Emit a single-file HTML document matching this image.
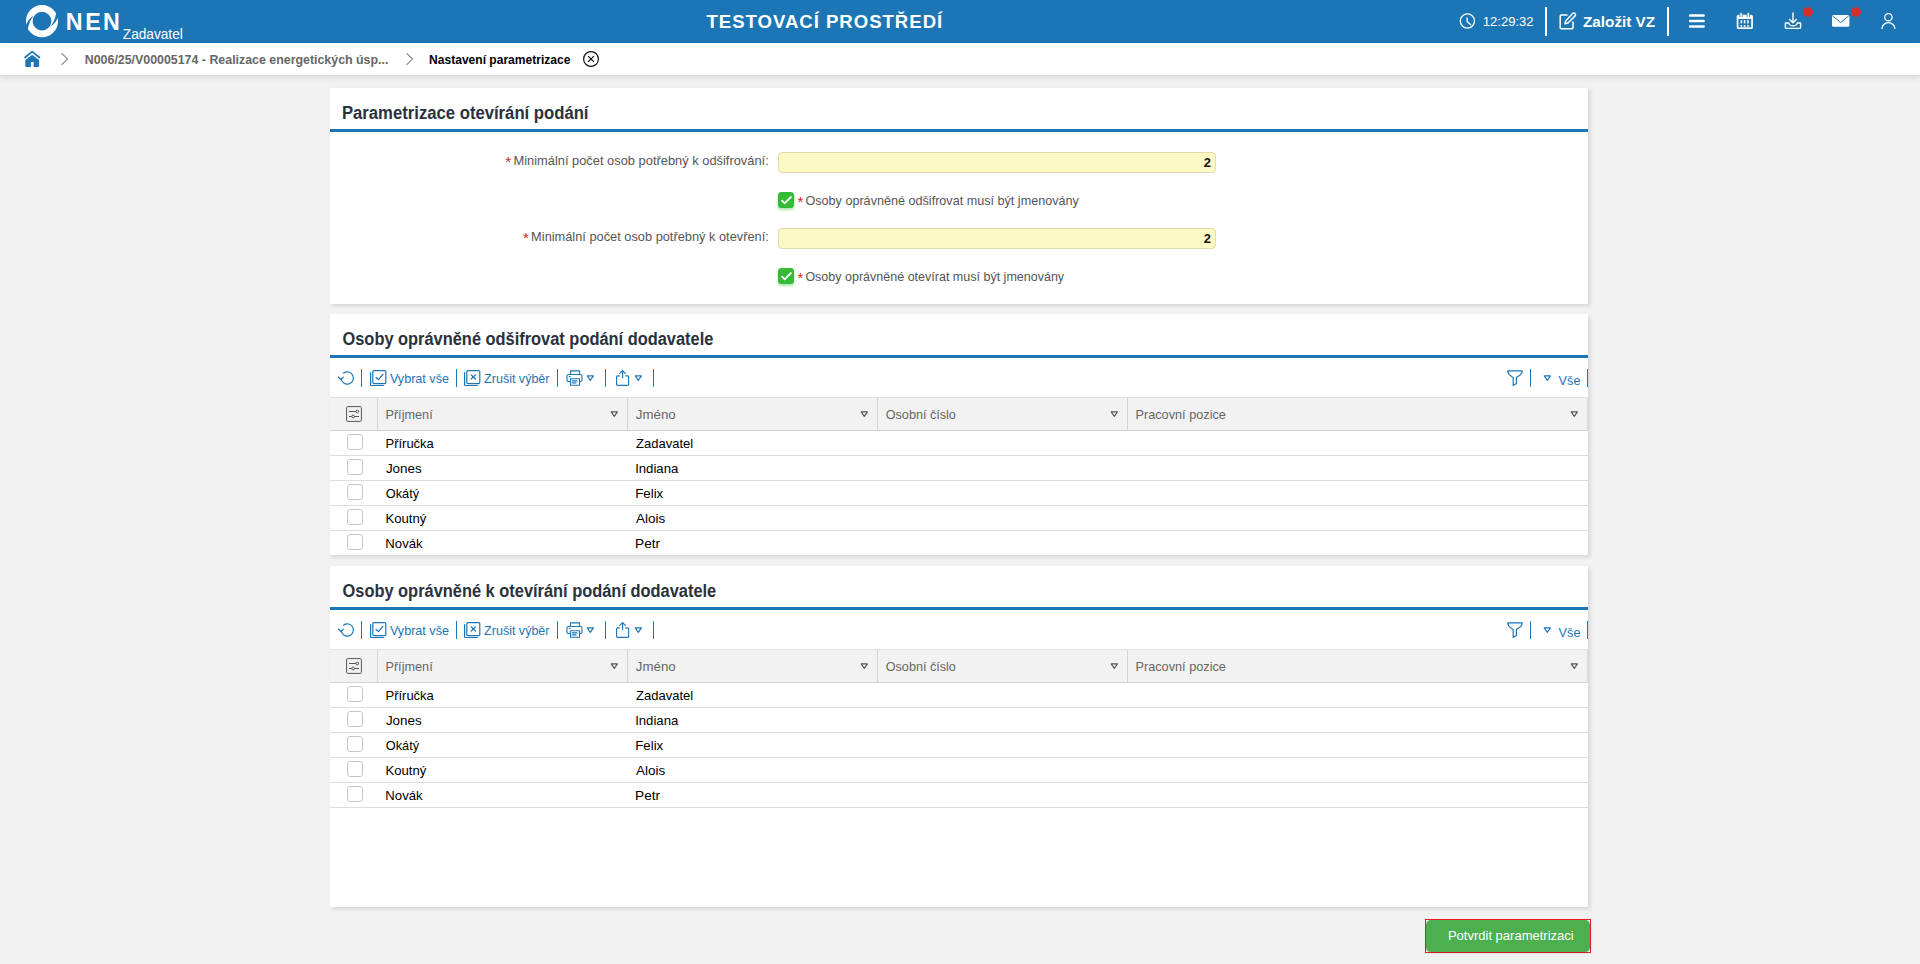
<!DOCTYPE html>
<html lang="cs">
<head>
<meta charset="utf-8">
<title>NEN - Nastavení parametrizace</title>
<style>
*{box-sizing:border-box;margin:0;padding:0}
html,body{width:1920px;height:964px;overflow:hidden;background:#f2f2f2;font-family:"Liberation Sans",sans-serif;font-size:13px;color:#000}
.abs{position:absolute}
.t{position:absolute;white-space:nowrap;line-height:1}
#hdr{position:absolute;left:0;top:0;width:1920px;height:43px;background:#1c75b4;color:#fff}
#bc{position:absolute;left:0;top:43px;width:1920px;height:32px;background:#fff;box-shadow:0 2px 6px rgba(0,0,0,.14)}
.panel{position:absolute;left:330px;width:1258px;background:#fff;box-shadow:2px 2px 4px rgba(0,0,0,.13)}
.ptitle{position:absolute;left:12px;top:15px;font-weight:bold;font-size:18px;color:#29323d;white-space:nowrap;line-height:20px}
.pline{position:absolute;left:0;top:41px;width:1258px;height:3px;background:#1c75b4}
.lbl{position:absolute;white-space:nowrap;color:#555;font-size:13px;line-height:16px}
.req{color:#d8232a;display:inline-block;width:8px;font-size:15.500px;line-height:0;position:relative;top:2px;left:-0.300px}
.inp{position:absolute;left:448px;width:438px;height:21px;background:#fdf9c4;border:1px solid #e1dbad;border-radius:4px;text-align:right;font-weight:bold;font-size:13px;line-height:19px;padding-right:4px;color:#111}
.chk{position:absolute;width:16px;height:16px;border-radius:3.500px;background:#34ba34;box-shadow:0 2px 3px rgba(52,186,52,.4)}
.tb{position:absolute;left:0;top:44px;width:1258px;height:39px;color:#1c75b4;font-size:13px}
.sep{position:absolute;top:11px;width:1px;height:18px;background:#1c75b4}
.th{position:absolute;left:0;top:83px;width:1258px;height:34px;background:#f2f2f2;border-top:1px solid #e2e2e2;border-bottom:1px solid #d4d4d4;border-right:1px solid #dcdcdc;color:#666;font-size:13px}
.th .c{position:absolute;top:0;height:32px;border-left:1px solid #d4d4d4}
.th .c span{position:absolute;left:8px;top:9px;line-height:15px;white-space:nowrap}
.row{position:absolute;left:0;width:1258px;height:25px;border-bottom:1px solid #ddd;font-size:13px;color:#000}
.row span{position:absolute;top:5px;line-height:15px;white-space:nowrap}
.tbt{font-size:13px;color:#1c75b4}
.cb{position:absolute;left:17px;top:3px;width:16px;height:16px;border:1px solid #c6c6c6;border-radius:3px;background:#fff}
/*fit*/
#nen{left:65px!important;top:10px!important;right:auto!important;transform:translateX(0.87px) scaleX(0.9493);transform-origin:0 0}
#zad{left:122px!important;top:27px!important;right:auto!important;transform:translateX(0.85px) scaleX(0.9744);transform-origin:0 0}
#test{left:706px!important;top:12px!important;right:auto!important;transform:translateX(0.46px) scaleX(0.9777);transform-origin:0 0}
#clock{left:1482px!important;top:15px!important;right:auto!important;transform:translateX(0.71px) scaleX(1.0053);transform-origin:0 0}
#zal{left:1583px!important;top:14px!important;right:auto!important;transform:translateX(0.00px) scaleX(1.0180);transform-origin:0 0}
#bc1{left:84px!important;top:10px!important;right:auto!important;transform:translateX(0.77px) scaleX(0.9527);transform-origin:0 0}
#bc2{left:429px!important;top:10px!important;right:auto!important;transform:translateX(0.07px) scaleX(0.9272);transform-origin:0 0}
#pt1{left:11px!important;top:15px!important;right:auto!important;transform:translateX(0.94px) scaleX(0.9266);transform-origin:0 0}
#p2t{left:12px!important;top:15px!important;right:auto!important;transform:translateX(0.50px) scaleX(0.9109);transform-origin:0 0}
#p3t{left:12px!important;top:15px!important;right:auto!important;transform:translateX(0.50px) scaleX(0.9112);transform-origin:0 0}
#l1{left:175px!important;top:65px!important;right:auto!important;transform:translateX(0.52px) scaleX(0.9897);transform-origin:0 0}
#l2{left:467px!important;top:105px!important;right:auto!important;transform:translateX(0.68px) scaleX(0.9701);transform-origin:0 0}
#l3{left:193px!important;top:141px!important;right:auto!important;transform:translateX(0.24px) scaleX(0.9847);transform-origin:0 0}
#l4{left:467px!important;top:181px!important;right:auto!important;transform:translateX(0.68px) scaleX(0.9626);transform-origin:0 0}
#btn{left:21px!important;top:9px!important;right:auto!important;transform:translateX(0.91px) scaleX(1.0005);transform-origin:0 0}
#p2a{left:59px!important;top:14px!important;right:auto!important;transform:translateX(0.91px) scaleX(0.9690);transform-origin:0 0}
#p2b{left:154px!important;top:14px!important;right:auto!important;transform:translateX(0.11px) scaleX(0.9627);transform-origin:0 0}
#p2c{left:1228px!important;top:16px!important;right:auto!important;transform:translateX(0.62px) scaleX(0.9755);transform-origin:0 0}
#p2h0{left:7px!important;top:9px!important;right:auto!important;transform:translateX(0.41px) scaleX(0.9770);transform-origin:0 0}
#p2h1{left:7px!important;top:9px!important;right:auto!important;transform:translateX(0.85px) scaleX(1.0214);transform-origin:0 0}
#p2h2{left:7px!important;top:9px!important;right:auto!important;transform:translateX(0.75px) scaleX(0.9704);transform-origin:0 0}
#p2h3{left:7px!important;top:9px!important;right:auto!important;transform:translateX(0.44px) scaleX(0.9778);transform-origin:0 0}
#p2r0a{left:55px!important;top:5px!important;right:auto!important;transform:translateX(0.47px) scaleX(0.9992);transform-origin:0 0}
#p2r0b{left:306px!important;top:5px!important;right:auto!important;transform:translateX(0.01px) scaleX(1.0009);transform-origin:0 0}
#p2r1a{left:55px!important;top:5px!important;right:auto!important;transform:translateX(0.91px) scaleX(1.0309);transform-origin:0 0}
#p2r1b{left:305px!important;top:5px!important;right:auto!important;transform:translateX(0.13px) scaleX(1.0114);transform-origin:0 0}
#p2r2a{left:55px!important;top:5px!important;right:auto!important;transform:translateX(0.78px) scaleX(0.9837);transform-origin:0 0}
#p2r2b{left:305px!important;top:5px!important;right:auto!important;transform:translateX(0.26px) scaleX(1.0195);transform-origin:0 0}
#p2r3a{left:55px!important;top:5px!important;right:auto!important;transform:translateX(0.41px) scaleX(1.0120);transform-origin:0 0}
#p2r3b{left:306px!important;top:5px!important;right:auto!important;transform:translateX(0.05px) scaleX(1.0394);transform-origin:0 0}
#p2r4a{left:55px!important;top:5px!important;right:auto!important;transform:translateX(0.37px) scaleX(1.0105);transform-origin:0 0}
#p2r4b{left:305px!important;top:5px!important;right:auto!important;transform:translateX(0.12px) scaleX(1.0468);transform-origin:0 0}
#p3a{left:59px!important;top:14px!important;right:auto!important;transform:translateX(0.91px) scaleX(0.9690);transform-origin:0 0}
#p3b{left:154px!important;top:14px!important;right:auto!important;transform:translateX(0.11px) scaleX(0.9627);transform-origin:0 0}
#p3c{left:1228px!important;top:16px!important;right:auto!important;transform:translateX(0.62px) scaleX(0.9755);transform-origin:0 0}
#p3h0{left:7px!important;top:9px!important;right:auto!important;transform:translateX(0.41px) scaleX(0.9770);transform-origin:0 0}
#p3h1{left:7px!important;top:9px!important;right:auto!important;transform:translateX(0.85px) scaleX(1.0214);transform-origin:0 0}
#p3h2{left:7px!important;top:9px!important;right:auto!important;transform:translateX(0.75px) scaleX(0.9704);transform-origin:0 0}
#p3h3{left:7px!important;top:9px!important;right:auto!important;transform:translateX(0.44px) scaleX(0.9778);transform-origin:0 0}
#p3r0a{left:55px!important;top:5px!important;right:auto!important;transform:translateX(0.47px) scaleX(0.9992);transform-origin:0 0}
#p3r0b{left:306px!important;top:5px!important;right:auto!important;transform:translateX(0.01px) scaleX(1.0009);transform-origin:0 0}
#p3r1a{left:55px!important;top:5px!important;right:auto!important;transform:translateX(0.91px) scaleX(1.0309);transform-origin:0 0}
#p3r1b{left:305px!important;top:5px!important;right:auto!important;transform:translateX(0.13px) scaleX(1.0114);transform-origin:0 0}
#p3r2a{left:55px!important;top:5px!important;right:auto!important;transform:translateX(0.78px) scaleX(0.9837);transform-origin:0 0}
#p3r2b{left:305px!important;top:5px!important;right:auto!important;transform:translateX(0.26px) scaleX(1.0195);transform-origin:0 0}
#p3r3a{left:55px!important;top:5px!important;right:auto!important;transform:translateX(0.41px) scaleX(1.0120);transform-origin:0 0}
#p3r3b{left:306px!important;top:5px!important;right:auto!important;transform:translateX(0.05px) scaleX(1.0394);transform-origin:0 0}
#p3r4a{left:55px!important;top:5px!important;right:auto!important;transform:translateX(0.37px) scaleX(1.0105);transform-origin:0 0}
#p3r4b{left:305px!important;top:5px!important;right:auto!important;transform:translateX(0.12px) scaleX(1.0468);transform-origin:0 0}
</style>
</head>
<body>
<div id="hdr">
<svg class="abs" style="left:24px;top:3px" width="36" height="36" viewBox="-18 -18.150 36 36"><circle r="16.050" fill="#fff"/><circle r="9.300" fill="#1c75b4"/><g fill="#1c75b4"><path d="M-7.700-5.900Q-14.100-2.600-16.900 6.200L-14.300 8.200Q-12.300-1.600-7.700-5.900z"/><path transform="rotate(180)" d="M-7.700-5.900Q-14.100-2.600-16.900 6.200L-14.300 8.200Q-12.300-1.600-7.700-5.900z"/></g></svg>
<span class="t" id="nen" style="left:66px;top:9px;font-size:24.500px;font-weight:bold;letter-spacing:2.600px">NEN</span>
<span class="t" id="zad" style="left:123px;top:26px;font-size:14px">Zadavatel</span>
<span class="t" id="test" style="left:707px;top:11px;font-size:19px;font-weight:bold;letter-spacing:1px">TESTOVACÍ PROSTŘEDÍ</span>
<svg class="abs" style="left:1459px;top:12px" width="18" height="18" viewBox="0 0 18 18" fill="none" stroke="#fff" stroke-width="1.300" stroke-linecap="round" stroke-linejoin="round"><circle cx="8.400" cy="9" r="7.100"/><path d="M8.100 6V9.600l3.700 3.100"/></svg>
<span class="t" id="clock" style="left:1484px;top:14px;font-size:13px">12:29:32</span>
<div class="abs" style="left:1545px;top:7px;width:2px;height:29px;background:#fff"></div>
<svg class="abs" style="left:1558px;top:11px" width="20" height="20" viewBox="0 0 20 20" fill="none" stroke="#fff" stroke-width="1.5" stroke-linejoin="round" stroke-linecap="round"><path d="M9 4H3.2a1 1 0 0 0-1 1v11.8a1 1 0 0 0 1 1H14a1 1 0 0 0 1-1V11"/><path d="M14.6 2.6a1.6 1.6 0 0 1 2.4 2.3L10 12l-3 .8.8-3z"/></svg>
<span class="t" id="zal" style="left:1583px;top:13px;font-size:15px;font-weight:bold">Založit VZ</span>
<div class="abs" style="left:1667px;top:7px;width:2px;height:29px;background:#fff"></div>
<svg class="abs" style="left:1688px;top:12px" width="18" height="18" viewBox="0 0 18 18" stroke="#fff" stroke-width="2.600" stroke-linecap="round"><path d="M2.200 3.500h13.400M2.200 9h13.400M2.200 14.500h13.400"/></svg>
<svg class="abs" style="left:1735px;top:11px" width="20" height="20" viewBox="0 0 20 20"><rect x="1.700" y="3.800" width="16.200" height="14.300" rx="1.600" fill="#fff"/><rect x="3.400" y="8" width="12.800" height="8.300" fill="#1c75b4"/><g fill="#fff" opacity=".9"><rect x="5.500" y="9.100" width="1.700" height="3.300"/><rect x="8.800" y="9.100" width="1.700" height="3.300"/><rect x="12.100" y="9.100" width="1.700" height="3.300"/><rect x="5.500" y="14" width="1.700" height="1.900"/><rect x="8.800" y="14" width="1.700" height="1.900"/><rect x="12.100" y="14" width="1.700" height="1.900"/></g><g fill="#fff"><rect x="5.300" y="1.800" width="1.500" height="3.400"/><rect x="12.500" y="1.800" width="1.500" height="3.400"/></g><g fill="#1c75b4"><rect x="4.500" y="3.800" width=".8" height="2.300"/><rect x="6.800" y="3.800" width=".8" height="2.300"/><rect x="11.700" y="3.800" width=".8" height="2.300"/><rect x="14" y="3.800" width=".8" height="2.300"/></g></svg>
<svg class="abs" style="left:1783px;top:11px" width="20" height="20" viewBox="0 0 20 20" fill="none" stroke="#fff" stroke-width="1.4" stroke-linecap="round" stroke-linejoin="round"><path d="M10 2v9.5M6.6 8.4L10 11.8l3.4-3.4"/><path d="M2.4 12v4.4a1 1 0 0 0 1 1h13.2a1 1 0 0 0 1-1V12h-3.4c-.3 1.7-2 2.8-4.200 2.800S6 13.700 5.800 12z"/></svg>
<div class="abs" style="left:1803px;top:7px;width:10px;height:10px;border-radius:5px;background:#d32f2f"></div>
<svg class="abs" style="left:1831px;top:14px" width="20" height="14" viewBox="0 0 20 14"><rect x="1" y="1" width="17.400" height="11.800" rx="1.500" fill="#fff"/><path d="M1.800 2l7.900 6.600L17.600 2" fill="none" stroke="#1c75b4" stroke-width="1"/></svg>
<div class="abs" style="left:1851px;top:7px;width:10px;height:10px;border-radius:5px;background:#d32f2f"></div>
<svg class="abs" style="left:1879px;top:11px" width="20" height="20" viewBox="0 0 20 20" fill="none" stroke="#fff" stroke-width="1.300" stroke-linecap="butt"><circle cx="9.400" cy="6.250" r="3.700"/><path d="M2.900 18c0-3.700 2.900-6.300 6.500-6.300s6.500 2.600 6.500 6.300"/></svg>
</div>
<div id="bc">
<svg class="abs" style="left:23px;top:7px" width="18" height="18" viewBox="0 0 18 18"><path d="M2 7.500L9.200 1.700l7.200 5.800" fill="none" stroke="#1c75b4" stroke-width="1.700" stroke-linecap="round" stroke-linejoin="round"/><path d="M2.300 10L9.200 4.700l6.900 5.300v6a.9.900 0 0 1-.9.900H10.600V12H7.900v4.900H3.200a.9.900 0 0 1-.9-.9z" fill="#1c75b4"/></svg>
<svg class="abs" style="left:60px;top:9px" width="9" height="14" viewBox="0 0 9 14" fill="none" stroke="#858585" stroke-width="1.050"><path d="M1.500 1.200L7.600 7l-6.100 5.800"/></svg>
<span class="t" id="bc1" style="left:85px;top:10px;font-size:13px;font-weight:bold;color:#666">N006/25/V00005174 - Realizace energetických úsp...</span>
<svg class="abs" style="left:405px;top:9px" width="9" height="14" viewBox="0 0 9 14" fill="none" stroke="#858585" stroke-width="1.050"><path d="M1.500 1.200L7.600 7l-6.100 5.800"/></svg>
<span class="t" id="bc2" style="left:430px;top:10px;font-size:13px;font-weight:bold;color:#000">Nastavení parametrizace</span>
<svg class="abs" style="left:582px;top:7px" width="18" height="18" viewBox="0 0 18 18" fill="none" stroke="#111" stroke-width="1.200"><circle cx="9" cy="9" r="7.400"/><path d="M6.100 6.100l5.800 5.800M11.900 6.100l-5.800 5.800" stroke-width="1.200"/></svg>
</div>
<div class="panel" id="p1" style="top:88px;height:216px">
<div class="ptitle" id="pt1">Parametrizace otevírání podání</div>
<div class="pline"></div>
<div class="lbl" id="l1" style="right:820px;top:64px"><span class="req">*</span>Minimální počet osob potřebný k odšifrování:</div>
<div class="inp" style="top:64px">2</div>
<div class="chk" style="left:448px;top:104px"><svg width="16" height="16" viewBox="0 0 16 16" style="position:absolute;left:0;top:0"><path d="M3.600 8.100l3.050 3.200 6.800-6.800" fill="none" stroke="#fff" stroke-width="1.800" stroke-linecap="butt" stroke-linejoin="miter"/></svg></div>
<div class="lbl" id="l2" style="left:468px;top:104px"><span class="req">*</span>Osoby oprávněné odšifrovat musí být jmenovány</div>
<div class="lbl" id="l3" style="right:820px;top:140px"><span class="req">*</span>Minimální počet osob potřebný k otevření:</div>
<div class="inp" style="top:140px">2</div>
<div class="chk" style="left:448px;top:180px"><svg width="16" height="16" viewBox="0 0 16 16" style="position:absolute;left:0;top:0"><path d="M3.600 8.100l3.050 3.200 6.800-6.800" fill="none" stroke="#fff" stroke-width="1.800" stroke-linecap="butt" stroke-linejoin="miter"/></svg></div>
<div class="lbl" id="l4" style="left:468px;top:180px"><span class="req">*</span>Osoby oprávněné otevírat musí být jmenovány</div>
</div>
<div class="panel" id="p2" style="top:314px;height:241px">
<div class="ptitle" id="p2t">Osoby oprávněné odšifrovat podání dodavatele</div>
<div class="pline"></div>
<div class="tb">
<svg class="abs" style="left:7px;top:12px" width="18" height="16" viewBox="0 0 18 16" fill="none" stroke="#1c75b4" stroke-width="1.150" stroke-linecap="round" stroke-linejoin="round"><path d="M6.500 3.200A6.100 6.100 0 1 1 4.200 8.400"/><path d="M1.300 7l2.600 2.600 2.500-2.500"/></svg>
<div class="sep" style="left:31px"></div><div class="sep" style="left:126px"></div><div class="sep" style="left:227px"></div><div class="sep" style="left:275px"></div><div class="sep" style="left:323px"></div>
<svg class="abs" style="left:40px;top:12px" width="17" height="17" viewBox="0 0 17 17" fill="none" stroke="#1c75b4" stroke-width="1.200" stroke-linejoin="round" stroke-linecap="round"><rect x="2.800" y="0.600" width="13" height="13" rx="1.200"/><path d="M0.600 2.600v12.100a0.800 0.800 0 0 0 .8.800H13.400"/><path d="M6.100 7.500l2.300 2.100 4.500-5.300"/></svg>
<span class="t tbt" id="p2a" style="left:60px;top:13px">Vybrat vše</span>
<svg class="abs" style="left:134px;top:12px" width="17" height="17" viewBox="0 0 17 17" fill="none" stroke="#1c75b4" stroke-width="1.200" stroke-linejoin="round" stroke-linecap="round"><rect x="2.800" y="0.600" width="13" height="13" rx="1.200"/><path d="M0.600 2.600v12.100a0.800 0.800 0 0 0 .8.800H13.400"/><path d="M7.200 4.800l4.200 4.200M11.400 4.800l-4.200 4.200"/></svg>
<span class="t tbt" id="p2b" style="left:154px;top:13px">Zrušit výběr</span>
<svg class="abs" style="left:236px;top:12px" width="17" height="17" viewBox="0 0 17 17" fill="none" stroke="#1c75b4" stroke-width="1.100" stroke-linejoin="round" stroke-linecap="round"><path d="M4.500 4.400V0.900h9V4.400"/><rect x="1" y="4.500" width="15" height="7" rx="1.400"/><rect x="4.500" y="8.800" width="9" height="6.500" fill="#fff"/><path d="M6.300 10.900h4.700M6.300 12.900h3.700M3.200 6.500h1"/></svg>
<svg width="9" height="7" viewBox="0 0 9 7" style="position:absolute;left:256px;top:17px"><path d="M1.200 0.900h6.200L4.300 5.400z" fill="none" stroke="#1c75b4" stroke-width="1.100" stroke-linejoin="round"/></svg>
<svg class="abs" style="left:285px;top:11px" width="16" height="18" viewBox="0 0 16 18" fill="none" stroke="#1c75b4" stroke-width="1.150" stroke-linejoin="round" stroke-linecap="round"><path d="M4.400 6.900H2.500a.9.900 0 0 0-.9.900v7.700a.9.900 0 0 0 .9.900h10.200a.9.900 0 0 0 .9-.9V7.800a.9.900 0 0 0-.9-.9h-1.900"/><path d="M7.600 8.700V1.900M4.800 4.400L7.600 1.600l2.800 2.800"/></svg>
<svg width="9" height="7" viewBox="0 0 9 7" style="position:absolute;left:304px;top:17px"><path d="M1.200 0.900h6.200L4.300 5.400z" fill="none" stroke="#1c75b4" stroke-width="1.100" stroke-linejoin="round"/></svg>
<svg class="abs" style="left:1176px;top:12px" width="18" height="18" viewBox="0 0 18 18" fill="none" stroke="#1c75b4" stroke-width="1.200" stroke-linejoin="round"><path d="M1.700 0.900H16.300C16.300 4.500 12.900 5.600 10.400 7.500V13.500L7.200 15.400V7.500C4.700 5.600 1.700 4.500 1.700 0.900z"/></svg>
<div class="sep" style="left:1200px"></div><div class="sep" style="left:1257px"></div>
<svg width="9" height="7" viewBox="0 0 9 7" style="position:absolute;left:1213px;top:17px"><path d="M1.200 0.900h6.200L4.300 5.400z" fill="none" stroke="#1c75b4" stroke-width="1.100" stroke-linejoin="round"/></svg>
<span class="t tbt" id="p2c" style="left:1229px;top:14px">Vše</span>
</div>
<div class="th">
<svg class="abs" style="left:16px;top:8px" width="16" height="16" viewBox="0 0 16 16" fill="none" stroke="#555" stroke-width="1"><rect x="0.600" y="0.600" width="14.800" height="14.800" rx="1"/><path d="M3 5.500h6.900M3 10.500h2.700M8.500 10.500H13"/><circle cx="11.300" cy="5.500" r="1.350"/><circle cx="7.100" cy="10.500" r="1.350"/></svg>
<div class="c" style="left:47px;width:250px"><span id="p2h0">Příjmení</span><svg width="9" height="7" viewBox="0 0 9 7" style="position:absolute;left:232px;top:13px"><path d="M1.200 0.900h6.200L4.300 5.400z" fill="none" stroke="#555" stroke-width="1.100" stroke-linejoin="round"/></svg></div>
<div class="c" style="left:297px;width:250px"><span id="p2h1">Jméno</span><svg width="9" height="7" viewBox="0 0 9 7" style="position:absolute;left:232px;top:13px"><path d="M1.200 0.900h6.200L4.300 5.400z" fill="none" stroke="#555" stroke-width="1.100" stroke-linejoin="round"/></svg></div>
<div class="c" style="left:547px;width:250px"><span id="p2h2">Osobní číslo</span><svg width="9" height="7" viewBox="0 0 9 7" style="position:absolute;left:232px;top:13px"><path d="M1.200 0.900h6.200L4.300 5.400z" fill="none" stroke="#555" stroke-width="1.100" stroke-linejoin="round"/></svg></div>
<div class="c" style="left:797px;width:460px"><span id="p2h3">Pracovní pozice</span><svg width="9" height="7" viewBox="0 0 9 7" style="position:absolute;left:442px;top:13px"><path d="M1.200 0.900h6.200L4.300 5.400z" fill="none" stroke="#555" stroke-width="1.100" stroke-linejoin="round"/></svg></div>
</div>
<div class="row" style="top:117px"><div class="cb"></div><span id="p2r0a" style="left:56px">Příručka</span><span id="p2r0b" style="left:306px">Zadavatel</span></div>
<div class="row" style="top:142px"><div class="cb"></div><span id="p2r1a" style="left:56px">Jones</span><span id="p2r1b" style="left:306px">Indiana</span></div>
<div class="row" style="top:167px"><div class="cb"></div><span id="p2r2a" style="left:56px">Okátý</span><span id="p2r2b" style="left:306px">Felix</span></div>
<div class="row" style="top:192px"><div class="cb"></div><span id="p2r3a" style="left:56px">Koutný</span><span id="p2r3b" style="left:306px">Alois</span></div>
<div class="row" style="top:217px"><div class="cb"></div><span id="p2r4a" style="left:56px">Novák</span><span id="p2r4b" style="left:306px">Petr</span></div>
</div>
<div class="panel" id="p3" style="top:566px;height:341px">
<div class="ptitle" id="p3t">Osoby oprávněné k otevírání podání dodavatele</div>
<div class="pline"></div>
<div class="tb">
<svg class="abs" style="left:7px;top:12px" width="18" height="16" viewBox="0 0 18 16" fill="none" stroke="#1c75b4" stroke-width="1.150" stroke-linecap="round" stroke-linejoin="round"><path d="M6.500 3.200A6.100 6.100 0 1 1 4.200 8.400"/><path d="M1.300 7l2.600 2.600 2.500-2.500"/></svg>
<div class="sep" style="left:31px"></div><div class="sep" style="left:126px"></div><div class="sep" style="left:227px"></div><div class="sep" style="left:275px"></div><div class="sep" style="left:323px"></div>
<svg class="abs" style="left:40px;top:12px" width="17" height="17" viewBox="0 0 17 17" fill="none" stroke="#1c75b4" stroke-width="1.200" stroke-linejoin="round" stroke-linecap="round"><rect x="2.800" y="0.600" width="13" height="13" rx="1.200"/><path d="M0.600 2.600v12.100a0.800 0.800 0 0 0 .8.800H13.400"/><path d="M6.100 7.500l2.300 2.100 4.500-5.300"/></svg>
<span class="t tbt" id="p3a" style="left:60px;top:13px">Vybrat vše</span>
<svg class="abs" style="left:134px;top:12px" width="17" height="17" viewBox="0 0 17 17" fill="none" stroke="#1c75b4" stroke-width="1.200" stroke-linejoin="round" stroke-linecap="round"><rect x="2.800" y="0.600" width="13" height="13" rx="1.200"/><path d="M0.600 2.600v12.100a0.800 0.800 0 0 0 .8.800H13.400"/><path d="M7.200 4.800l4.200 4.200M11.400 4.800l-4.200 4.200"/></svg>
<span class="t tbt" id="p3b" style="left:154px;top:13px">Zrušit výběr</span>
<svg class="abs" style="left:236px;top:12px" width="17" height="17" viewBox="0 0 17 17" fill="none" stroke="#1c75b4" stroke-width="1.100" stroke-linejoin="round" stroke-linecap="round"><path d="M4.500 4.400V0.900h9V4.400"/><rect x="1" y="4.500" width="15" height="7" rx="1.400"/><rect x="4.500" y="8.800" width="9" height="6.500" fill="#fff"/><path d="M6.300 10.900h4.700M6.300 12.900h3.700M3.200 6.500h1"/></svg>
<svg width="9" height="7" viewBox="0 0 9 7" style="position:absolute;left:256px;top:17px"><path d="M1.200 0.900h6.200L4.300 5.400z" fill="none" stroke="#1c75b4" stroke-width="1.100" stroke-linejoin="round"/></svg>
<svg class="abs" style="left:285px;top:11px" width="16" height="18" viewBox="0 0 16 18" fill="none" stroke="#1c75b4" stroke-width="1.150" stroke-linejoin="round" stroke-linecap="round"><path d="M4.400 6.900H2.500a.9.900 0 0 0-.9.900v7.700a.9.900 0 0 0 .9.900h10.200a.9.900 0 0 0 .9-.9V7.800a.9.900 0 0 0-.9-.9h-1.900"/><path d="M7.600 8.700V1.900M4.800 4.400L7.600 1.600l2.800 2.800"/></svg>
<svg width="9" height="7" viewBox="0 0 9 7" style="position:absolute;left:304px;top:17px"><path d="M1.200 0.900h6.200L4.300 5.400z" fill="none" stroke="#1c75b4" stroke-width="1.100" stroke-linejoin="round"/></svg>
<svg class="abs" style="left:1176px;top:12px" width="18" height="18" viewBox="0 0 18 18" fill="none" stroke="#1c75b4" stroke-width="1.200" stroke-linejoin="round"><path d="M1.700 0.900H16.300C16.300 4.500 12.900 5.600 10.400 7.500V13.500L7.200 15.400V7.500C4.700 5.600 1.700 4.500 1.700 0.900z"/></svg>
<div class="sep" style="left:1200px"></div><div class="sep" style="left:1257px"></div>
<svg width="9" height="7" viewBox="0 0 9 7" style="position:absolute;left:1213px;top:17px"><path d="M1.200 0.900h6.200L4.300 5.400z" fill="none" stroke="#1c75b4" stroke-width="1.100" stroke-linejoin="round"/></svg>
<span class="t tbt" id="p3c" style="left:1229px;top:14px">Vše</span>
</div>
<div class="th">
<svg class="abs" style="left:16px;top:8px" width="16" height="16" viewBox="0 0 16 16" fill="none" stroke="#555" stroke-width="1"><rect x="0.600" y="0.600" width="14.800" height="14.800" rx="1"/><path d="M3 5.500h6.900M3 10.500h2.700M8.500 10.500H13"/><circle cx="11.300" cy="5.500" r="1.350"/><circle cx="7.100" cy="10.500" r="1.350"/></svg>
<div class="c" style="left:47px;width:250px"><span id="p3h0">Příjmení</span><svg width="9" height="7" viewBox="0 0 9 7" style="position:absolute;left:232px;top:13px"><path d="M1.200 0.900h6.200L4.300 5.400z" fill="none" stroke="#555" stroke-width="1.100" stroke-linejoin="round"/></svg></div>
<div class="c" style="left:297px;width:250px"><span id="p3h1">Jméno</span><svg width="9" height="7" viewBox="0 0 9 7" style="position:absolute;left:232px;top:13px"><path d="M1.200 0.900h6.200L4.300 5.400z" fill="none" stroke="#555" stroke-width="1.100" stroke-linejoin="round"/></svg></div>
<div class="c" style="left:547px;width:250px"><span id="p3h2">Osobní číslo</span><svg width="9" height="7" viewBox="0 0 9 7" style="position:absolute;left:232px;top:13px"><path d="M1.200 0.900h6.200L4.300 5.400z" fill="none" stroke="#555" stroke-width="1.100" stroke-linejoin="round"/></svg></div>
<div class="c" style="left:797px;width:460px"><span id="p3h3">Pracovní pozice</span><svg width="9" height="7" viewBox="0 0 9 7" style="position:absolute;left:442px;top:13px"><path d="M1.200 0.900h6.200L4.300 5.400z" fill="none" stroke="#555" stroke-width="1.100" stroke-linejoin="round"/></svg></div>
</div>
<div class="row" style="top:117px"><div class="cb"></div><span id="p3r0a" style="left:56px">Příručka</span><span id="p3r0b" style="left:306px">Zadavatel</span></div>
<div class="row" style="top:142px"><div class="cb"></div><span id="p3r1a" style="left:56px">Jones</span><span id="p3r1b" style="left:306px">Indiana</span></div>
<div class="row" style="top:167px"><div class="cb"></div><span id="p3r2a" style="left:56px">Okátý</span><span id="p3r2b" style="left:306px">Felix</span></div>
<div class="row" style="top:192px"><div class="cb"></div><span id="p3r3a" style="left:56px">Koutný</span><span id="p3r3b" style="left:306px">Alois</span></div>
<div class="row" style="top:217px"><div class="cb"></div><span id="p3r4a" style="left:56px">Novák</span><span id="p3r4b" style="left:306px">Petr</span></div>
</div>
<div class="abs" style="left:1425px;top:919px;width:166px;height:34px;border:1px solid #ec1c24"><div style="position:absolute;left:0;top:0;width:164px;height:32px;background:#4caf50;border-radius:5px;box-shadow:0 1px 2px rgba(0,0,0,.2)"></div><span class="t" id="btn" style="left:23px;top:9px;font-size:13px;color:#fff">Potvrdit parametrizaci</span></div>
</body>
</html>
